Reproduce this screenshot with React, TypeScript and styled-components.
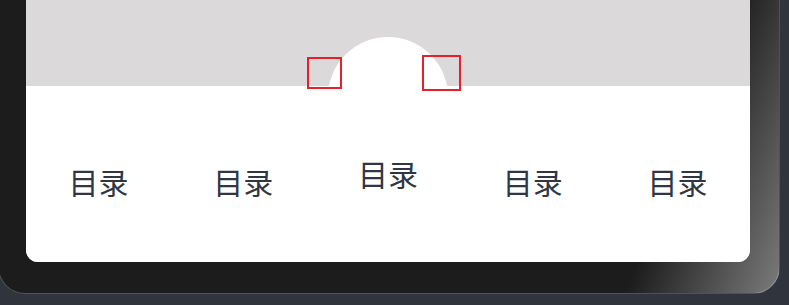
import React from "react";
import styled, { createGlobalStyle } from "styled-components";

const Global = createGlobalStyle`
  html, body { margin: 0; padding: 0; background: #30343d; }
  body { font-family: "Noto Sans CJK SC", "Noto Sans", sans-serif; overflow: hidden; }
`;

const Frame = styled.div`
  box-sizing: border-box;
  width: 782px;
  height: 324px;
  margin: -30px 0 0 -2px;
  padding: 29px 0 0 27px;
  border: 1px solid rgba(255, 255, 255, 0.24);
  border-radius: 27px;
  background: linear-gradient(110.8deg, #1c1c1c 0, #1c1c1c 700px, #6a6a6a 818px, #7d7d7d 846px);
`;

const Screen = styled.div`
  width: 724px;
  height: 262px;
  display: flex;
  flex-direction: column;
  background: #dbd9da;
  border-radius: 0 0 12px 12px;
  overflow: hidden;
`;

const Content = styled.div`
  flex: 1;
`;

const TabBar = styled.nav`
  height: 176px;
  background: #ffffff;
  display: grid;
  grid-template-columns: repeat(5, 1fr);
`;

const TabItem = styled.div<{ $raised?: boolean }>`
  position: relative;
  display: flex;
  justify-content: center;
  align-items: flex-start;
  padding-top: ${(p) => (p.$raised ? 72 : 80)}px;
`;

const Label = styled.span`
  position: relative;
  z-index: 2;
  font-size: 30px;
  line-height: 30px;
  color: #303642;
`;

const Bump = styled.div`
  position: absolute;
  top: -49px;
  left: 50%;
  margin-left: -60px;
  width: 120px;
  height: 120px;
  border-radius: 50%;
  background: #ffffff;
  z-index: 1;
`;

const Marker = styled.div<{ $dx: number; $dy: number; $w: number; $h: number }>`
  position: absolute;
  box-sizing: border-box;
  left: calc(50% + ${(p) => p.$dx}px);
  top: ${(p) => p.$dy}px;
  width: ${(p) => p.$w}px;
  height: ${(p) => p.$h}px;
  border: 2px solid #e9202a;
  z-index: 3;
`;

const tabs = ["目录", "目录", "目录", "目录", "目录"];

export default function App() {
  return (
    <>
      <Global />
      <Frame>
        <Screen>
          <Content />
          <TabBar>
            {tabs.map((t, i) =>
              i === 2 ? (
                <TabItem key={i} $raised>
                  <Bump />
                  <Marker $dx={-81} $dy={-29} $w={35} $h={32} />
                  <Marker $dx={34} $dy={-31} $w={39} $h={36} />
                  <Label>{t}</Label>
                </TabItem>
              ) : (
                <TabItem key={i}>
                  <Label>{t}</Label>
                </TabItem>
              )
            )}
          </TabBar>
        </Screen>
      </Frame>
    </>
  );
}
